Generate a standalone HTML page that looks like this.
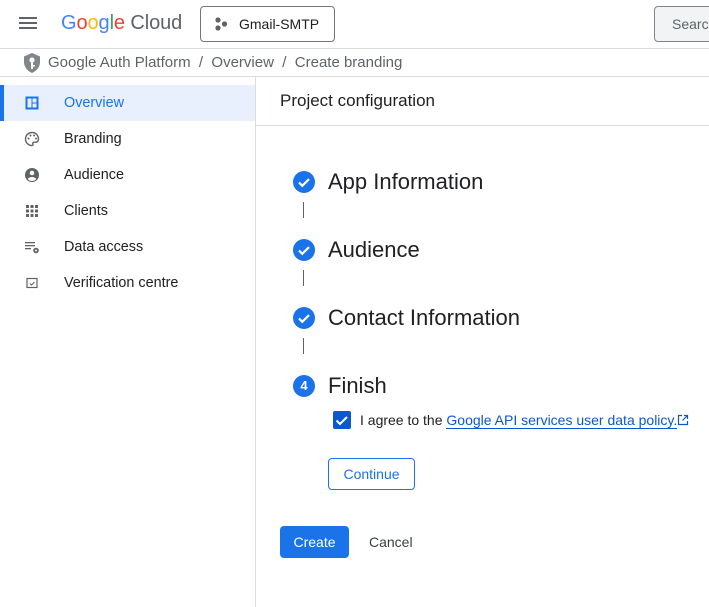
<!DOCTYPE html>
<html><head><style>
*{box-sizing:border-box;margin:0;padding:0}
body{width:709px;height:607px;overflow:hidden;background:#fff;font-family:"Liberation Sans",Arial,sans-serif;color:#202124;position:relative}
.a{position:absolute}
.nav{position:absolute;left:0;width:256px;height:36px;display:flex;align-items:center;font-size:14.4px;color:#202124}
.nav .ic{position:absolute;left:24px;top:10px;width:16px;height:16px}
.nav span{position:absolute;left:64px}
.step{position:absolute;left:293px;width:22px;height:22px;border-radius:50%;background:#1a73e8}
.st{position:absolute;left:328px;font-size:22px;color:#202124}
.vl{position:absolute;left:303px;width:1px;height:16px;background:#5f6368}
</style></head><body>
<div class="a" style="left:19px;top:17px;width:18px;height:2px;background:#5f6368;box-shadow:0 5px 0 #5f6368,0 10px 0 #5f6368"></div>
<div class="a" style="left:61px;top:12px;font-size:20px;letter-spacing:-0.1px"><span style="color:#4285f4">G</span><span style="color:#ea4335">o</span><span style="color:#fbbc04">o</span><span style="color:#4285f4">g</span><span style="color:#34a853">l</span><span style="color:#ea4335">e</span><span style="color:#5f6368"> Cloud</span></div>
<div class="a" style="left:200px;top:6px;width:135px;height:36px;border:1px solid #747775;border-radius:4px"></div>
<svg class="a" style="left:214px;top:17px" width="16" height="14"><circle cx="4" cy="3" r="2.6" fill="#5f6368"/><circle cx="4" cy="11" r="2.6" fill="#5f6368"/><circle cx="10.5" cy="7" r="2.6" fill="#5f6368"/></svg>
<div class="a" style="left:239px;top:16px;font-size:14px">Gmail-SMTP</div>
<div class="a" style="left:654px;top:6px;width:70px;height:36px;border:1px solid #80868b;border-radius:4px;background:#f1f3f4"></div>
<div class="a" style="left:672px;top:16px;font-size:14px;color:#5f6368">Search</div>
<div class="a" style="left:0;top:48px;width:709px;height:1px;background:#dadce0"></div>
<svg class="a" style="left:22px;top:52px" width="20" height="22" viewBox="0 0 20 22"><path d="M10 1 L18 4.5 V10 C18 15 14.5 19 10 21 C5.5 19 2 15 2 10 V4.5 Z" fill="#80868b"/><circle cx="10" cy="8" r="2.6" fill="#fff"/><rect x="9" y="10" width="2" height="7" fill="#fff"/><rect x="11" y="13" width="2" height="1.5" fill="#fff"/></svg>
<div class="a" style="left:48px;top:54px;font-size:15px;color:#5f6368;white-space:nowrap">Google Auth Platform &nbsp;/&nbsp; Overview &nbsp;/&nbsp; Create branding</div>
<div class="a" style="left:0;top:76px;width:709px;height:1px;background:#dadce0"></div>
<div class="a" style="left:255px;top:77px;width:1px;height:530px;background:#dadce0"></div>
<div class="nav" style="top:85px;background:#e8f0fe;width:255px"><div class="a" style="left:0;top:0;width:4px;height:36px;background:#1a73e8"></div>
<svg class="ic" viewBox="0 0 16 16"><rect x="1.5" y="1.5" width="13" height="13" fill="#1a73e8"/><rect x="3.5" y="3.5" width="4" height="9" fill="#e8f0fe"/><rect x="8.5" y="3.5" width="4" height="4" fill="#e8f0fe"/><rect x="8.5" y="8.5" width="4" height="4" fill="#e8f0fe"/></svg><span style="color:#1a73e8">Overview</span></div>
<div class="nav" style="top:121px"><svg class="ic" viewBox="0 0 16 16"><path d="M8 1.5a6.5 6.5 0 0 0 0 13c1 0 1.3-.8.9-1.5-.5-.8 0-1.8 1-1.8h1.6a3 3 0 0 0 3-3C14.5 4.4 11.6 1.5 8 1.5z" fill="none" stroke="#5f6368" stroke-width="1.4"/><circle cx="4.5" cy="7.5" r="1" fill="#5f6368"/><circle cx="6.5" cy="4.5" r="1" fill="#5f6368"/><circle cx="10" cy="4.5" r="1" fill="#5f6368"/><circle cx="12" cy="7.5" r="1" fill="#5f6368"/></svg><span>Branding</span></div>
<div class="nav" style="top:157px"><svg class="ic" viewBox="0 0 16 16"><circle cx="8" cy="8" r="7" fill="#5f6368"/><circle cx="8" cy="6" r="2.3" fill="#fff"/><path d="M3.8 12c1-1.5 2.5-2 4.2-2s3.2.5 4.2 2a5.5 5.5 0 0 1-8.4 0z" fill="#fff"/></svg><span>Audience</span></div>
<div class="nav" style="top:193px"><svg class="ic" viewBox="0 0 16 16" fill="#5f6368"><rect x="2" y="2" width="3" height="3"/><rect x="6.5" y="2" width="3" height="3"/><rect x="11" y="2" width="3" height="3"/><rect x="2" y="6.5" width="3" height="3"/><rect x="6.5" y="6.5" width="3" height="3"/><rect x="11" y="6.5" width="3" height="3"/><rect x="2" y="11" width="3" height="3"/><rect x="6.5" y="11" width="3" height="3"/><rect x="11" y="11" width="3" height="3"/></svg><span>Clients</span></div>
<div class="nav" style="top:229px"><svg class="ic" viewBox="0 0 16 16" fill="#5f6368"><rect x="1" y="3" width="10" height="1.3"/><rect x="1" y="6" width="10" height="1.3"/><rect x="1" y="9" width="6" height="1.3"/><circle cx="12" cy="11.5" r="2.8"/><circle cx="12" cy="11.5" r="1" fill="#fff"/></svg><span>Data access</span></div>
<div class="nav" style="top:265px"><svg class="ic" viewBox="0 0 16 16"><rect x="3" y="3.5" width="10" height="9" fill="none" stroke="#5f6368" stroke-width="1.2"/><path d="M6 8.5l1.5 1.5 3-3" fill="none" stroke="#5f6368" stroke-width="1.1"/></svg><span>Verification centre</span></div>
<div class="a" style="left:280px;top:91px;font-size:17px">Project configuration</div>
<div class="a" style="left:256px;top:125px;width:453px;height:1px;background:#dadce0"></div>
<svg width="0" height="0" style="position:absolute"><defs><path id="ck" d="M6 11.5l3.3 3.3 6.7-6.7" fill="none" stroke="#fff" stroke-width="2.2"/></defs></svg>
<div class="step" style="top:171px"><svg width="22" height="22"><use href="#ck"/></svg></div>
<div class="st" style="top:169px">App Information</div>
<div class="vl" style="top:202px"></div>
<div class="step" style="top:239px"><svg width="22" height="22"><use href="#ck"/></svg></div>
<div class="st" style="top:237px">Audience</div>
<div class="vl" style="top:270px"></div>
<div class="step" style="top:307px"><svg width="22" height="22"><use href="#ck"/></svg></div>
<div class="st" style="top:305px">Contact Information</div>
<div class="vl" style="top:338px"></div>
<div class="step" style="top:375px;color:#fff;font-size:13px;font-weight:bold;text-align:center;line-height:22px">4</div>
<div class="st" style="top:373px">Finish</div>
<div class="a" style="left:333px;top:411px;width:18px;height:18px;background:#0b57d0;border-radius:2px"><svg width="18" height="18"><path d="M3.5 9.5l3.5 3.5 7-7" fill="none" stroke="#fff" stroke-width="2"/></svg></div>
<div class="a" style="left:360px;top:412px;font-size:14px;white-space:nowrap">I agree to the <span style="color:#0b57d0;border-bottom:1px solid #0b57d0">Google API services user data policy.</span></div>
<svg class="a" style="left:677px;top:414px" width="12" height="12" viewBox="0 0 12 12"><path d="M5 1.5H1.5v9h9V7M7 1.5h3.5V5M10.5 1.5L5.5 6.5" fill="none" stroke="#0b57d0" stroke-width="1.2"/></svg>
<div class="a" style="left:328px;top:458px;width:87px;height:32px;border:1px solid #1a73e8;border-radius:4px;color:#1a73e8;font-size:14px;text-align:center;line-height:30px">Continue</div>
<div class="a" style="left:280px;top:526px;width:69px;height:32px;background:#1a73e8;border-radius:4px;color:#fff;font-size:14px;text-align:center;line-height:32px">Create</div>
<div class="a" style="left:369px;top:534px;font-size:14px;color:#3c4043">Cancel</div>
</body></html>
